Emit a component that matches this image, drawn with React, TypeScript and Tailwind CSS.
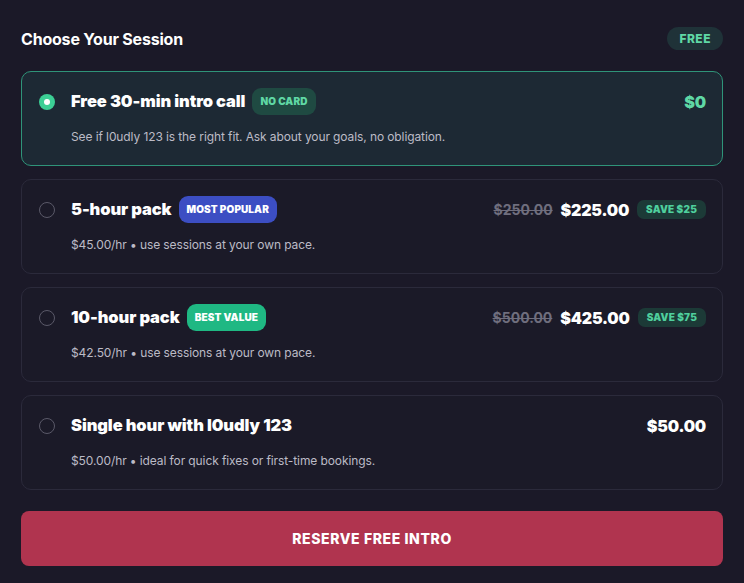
import React from "react";

const font = { fontFamily: "Inter, 'Noto Sans', sans-serif" };

type Opt = {
  title: string;
  badge?: { text: string; cls: string };
  desc: string;
  old?: string;
  price: string;
  save?: string;
  selected?: boolean;
};

const options: Opt[] = [
  {
    title: "Free 30-min intro call",
    badge: { text: "NO CARD", cls: "bg-[#1f4a42] text-[#5fd8a5]" },
    desc: "See if l0udly 123 is the right fit. Ask about your goals, no obligation.",
    price: "$0",
    selected: true,
  },
  {
    title: "5-hour pack",
    badge: { text: "MOST POPULAR", cls: "bg-[#3c4ec3] text-white" },
    desc: "$45.00/hr • use sessions at your own pace.",
    old: "$250.00",
    price: "$225.00",
    save: "SAVE $25",
  },
  {
    title: "10-hour pack",
    badge: { text: "BEST VALUE", cls: "bg-[#1fb883] text-white" },
    desc: "$42.50/hr • use sessions at your own pace.",
    old: "$500.00",
    price: "$425.00",
    save: "SAVE $75",
  },
  {
    title: "Single hour with l0udly 123",
    desc: "$50.00/hr • ideal for quick fixes or first-time bookings.",
    price: "$50.00",
  },
];

function Card({ o }: { o: Opt }) {
  return (
    <div
      className={
        "flex h-[95px] rounded-[10px] border pl-4 pr-4 pt-[16px] " +
        (o.selected
          ? "border-[#2f9479] bg-[#1d2934]"
          : "border-[#2b2a3b] bg-[#1b1a28]")
      }
    >
      <div className="flex h-[27px] w-[18px] shrink-0 items-center justify-center">
        {o.selected ? (
          <div className="flex h-4 w-4 items-center justify-center rounded-full bg-[#3ccf95]">
            <div className="h-[6px] w-[6px] rounded-full bg-white" />
          </div>
        ) : (
          <div className="h-4 w-4 rounded-full border border-[#5a5968]" />
        )}
      </div>
      <div className="ml-[15px] flex flex-1 flex-col">
        <div className="flex h-[27px] items-center">
          <span className="text-[16.5px] font-black tracking-[-0.1px] text-white">
            {o.title}
          </span>
          {o.badge && (
            <span
              className={
                "ml-[7px] flex h-[27px] items-center rounded-[9px] px-[8px] text-[10px] font-black tracking-[0.1px] " +
                o.badge.cls
              }
            >
              {o.badge.text}
            </span>
          )}
          <div className="ml-auto flex items-center">
            {o.old && (
              <span className="mr-[8px] text-[14px] font-bold text-[#6f6e7e] line-through decoration-[#6f6e7e]">
                {o.old}
              </span>
            )}
            <span
              className={
                "text-[16px] font-black tracking-[-0.2px] " +
                (o.selected ? "text-[#5fd8a5]" : "text-white")
              }
            >
              {o.price}
            </span>
            {o.save && (
              <span className="ml-[8px] flex h-[19px] items-center rounded-[7px] bg-[#1c3a37] px-[9px] text-[10px] font-black tracking-[0.2px] text-[#4fcf9d]">
                {o.save}
              </span>
            )}
          </div>
        </div>
        <div className="mt-[13px] text-[12px] tracking-[-0.1px] text-[#bcbbc6]">{o.desc}</div>
      </div>
    </div>
  );
}

export default function App() {
  return (
    <div className="min-h-[583px] w-full bg-[#1b1928] px-[21px] pt-[27px]" style={font}>
      <div className="flex h-[23px] items-center justify-between">
        <h2 className="text-[16px] font-bold tracking-[-0.2px] text-white">Choose Your Session</h2>
        <span className="flex h-[23px] items-center rounded-full bg-[#1f3238] px-[12px] text-[12px] font-extrabold tracking-[0.5px] text-[#5fd8a5]">
          FREE
        </span>
      </div>
      <div className="mt-[21px] flex flex-col gap-[13px]">
        {options.map((o) => (
          <Card key={o.title} o={o} />
        ))}
      </div>
      <button className="mt-[21px] flex h-[55px] w-full items-center justify-center rounded-[8px] bg-[#b0344f] text-[14px] font-extrabold tracking-[0.6px] text-white">
        RESERVE FREE INTRO
      </button>
    </div>
  );
}
